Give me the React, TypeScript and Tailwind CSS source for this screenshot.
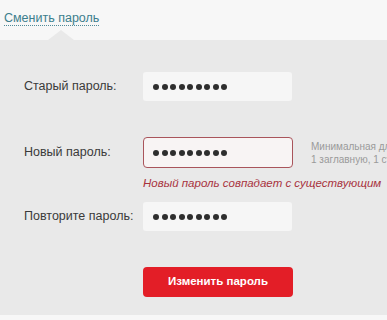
import React from "react"

const font = { fontFamily: '"Liberation Sans", Arial, sans-serif' }

function Dots() {
  return (
    <div className="flex items-center gap-[2.5px]">
      {Array.from({ length: 9 }).map((_, i) => (
        <span key={i} className="block h-[6px] w-[6px] shrink-0 rounded-full bg-[#2e2e2e]" />
      ))}
    </div>
  )
}

function PasswordBox({ error }: { error?: boolean }) {
  return (
    <div
      className={
        error
          ? "flex h-[31px] w-[150px] shrink-0 items-center rounded-[4px] border border-[#a9545b] bg-[#f8f4f4] pl-[9px]"
          : "flex h-[29px] w-[149px] shrink-0 items-center rounded-[3px] bg-[#f6f6f6] pl-[10px]"
      }
    >
      <Dots />
    </div>
  )
}

function Label({ children }: { children: React.ReactNode }) {
  return (
    <div className="w-[143px] shrink-0 whitespace-nowrap pl-[24px] text-[12.5px] text-[#3a3a3a]">
      {children}
    </div>
  )
}

export default function App() {
  return (
    <div className="h-[320px] w-[387px] overflow-hidden bg-[#f7f7f7]" style={font}>
      {/* Header link */}
      <div className="h-[40px] pl-[4px] pt-[5px]">
        <span className="border-b border-dotted border-[#4f8a97] text-[12.5px] leading-[13px] text-[#3c7e8d]">
          Сменить пароль
        </span>
      </div>

      {/* Panel */}
      <div className="relative h-[275px] bg-[#e9e9e9] pt-[32px]">
        <div className="absolute left-[48px] top-[-10px] h-0 w-0 border-x-[13px] border-b-[10px] border-x-transparent border-b-[#e9e9e9]" />

        {/* Old password */}
        <div className="flex items-center">
          <Label>Старый пароль:</Label>
          <PasswordBox />
        </div>

        {/* New password */}
        <div className="mt-[36px] flex items-center">
          <Label>Новый пароль:</Label>
          <PasswordBox error />
          <div className="ml-[18px] shrink-0 whitespace-nowrap text-[10px] leading-[13px] text-[#9a9a9a]">
            <div>Минимальная длина пароля 6 символов,</div>
            <div>1 заглавную, 1 строчную букву</div>
          </div>
        </div>
        <div className="mt-[8px] whitespace-nowrap pl-[143px] text-[11.5px] italic leading-[14px] text-[#a8323d]">
          Новый пароль совпадает с существующим
        </div>

        {/* Repeat password */}
        <div className="mt-[12px] flex items-center">
          <Label>Повторите пароль:</Label>
          <PasswordBox />
        </div>

        {/* Submit */}
        <div className="mt-[36px] pl-[143px]">
          <button className="h-[30px] w-[150px] rounded-[4px] bg-[#e31e27] text-[11.5px] font-bold text-white">
            Изменить пароль
          </button>
        </div>
      </div>
    </div>
  )
}
